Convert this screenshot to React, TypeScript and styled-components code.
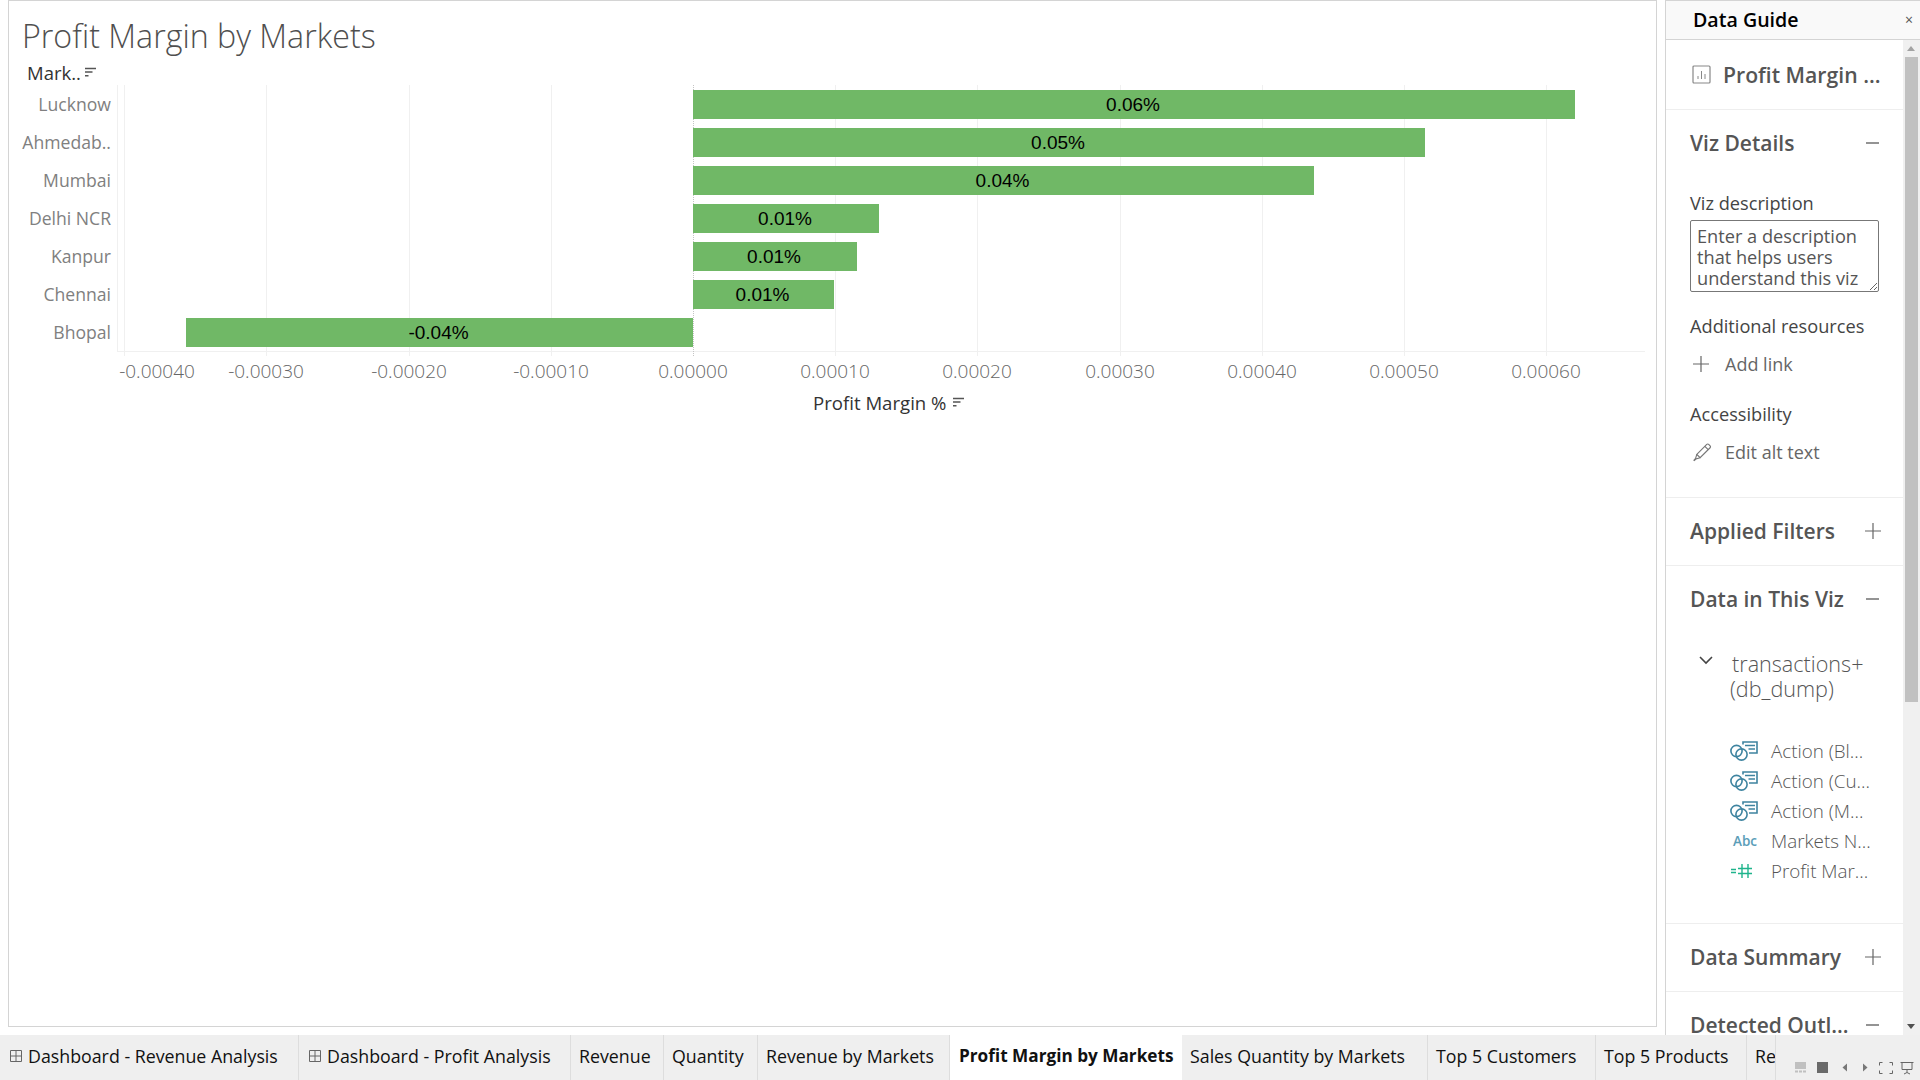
import React from "react";
import styled, { createGlobalStyle } from "styled-components";

const Global = createGlobalStyle`
  html, body { margin: 0; padding: 0; background: #fff; overflow: hidden; }
  * { box-sizing: border-box; }
  body { font-family: "Open Sans", "Liberation Sans", sans-serif; }
`;

const Page = styled.div`
  width: 1920px;
  height: 1080px;
  display: flex;
  flex-direction: column;
  overflow: hidden;
`;
const Main = styled.div`
  height: 1035px;
  display: flex;
  align-items: flex-start;
  padding-left: 8px;
`;

/* ---------- worksheet ---------- */
const Sheet = styled.section`
  width: 1649px;
  height: 1027px;
  border: 1px solid #d4d4d4;
`;
const Title = styled.h1`
  margin: 0;
  height: 60px;
  padding: 15px 0 0 13px;
  font-size: 32.2px;
  line-height: 40px;
  font-weight: 300;
  color: #4f4f4f;
  white-space: nowrap;
`;
const HeaderRow = styled.div`
  height: 24px;
  padding: 0 0 1px 18px;
  display: flex;
  align-items: center;
  gap: 4px;
  font-size: 18.5px;
  font-weight: 500;
  color: #333;
`;
const Chart = styled.div`
  display: grid;
  grid-template-columns: 108px 1528px;
`;
const RowLabels = styled.div`
  display: flex;
  flex-direction: column;
`;
const RowLabel = styled.div`
  height: 38px;
  padding-right: 6px;
  display: flex;
  align-items: center;
  justify-content: flex-end;
  font-size: 17.6px;
  color: #808080;
`;
const Plot = styled.div`
  position: relative;
  border-left: 1px solid #f0f0f0;
  border-bottom: 1px solid #f0f0f0;
  height: 267px;
`;
const GridLine = styled.div<{ $zero?: boolean }>`
  position: absolute;
  top: 0;
  bottom: -5px;
  width: 1px;
  ${(p) => (p.$zero ? "border-left: 1px dotted #c4c4c4;" : "background: #f0f0f0;")}
`;
const BarRow = styled.div`
  position: relative;
  height: 38px;
  padding: 5px 0 4px;
`;
const Bar = styled.div`
  height: 29px;
  padding-right: 2px;
  background: #70b866;
  display: flex;
  align-items: center;
  justify-content: center;
  font-family: "Liberation Sans", Arial, sans-serif;
  font-size: 19px;
  color: #000;
`;
const AxisSpacer = styled.div``;
const AxisLabels = styled.div`
  position: relative;
  height: 38px;
`;
const TickLabel = styled.span`
  position: absolute;
  top: 7px;
  transform: translateX(-50%);
  font-size: 19px;
  line-height: 24px;
  font-weight: 300;
  color: #666;
  white-space: nowrap;
`;
const AxisTitle = styled.div`
  grid-column: 1 / -1;
  height: 24px;
  padding-left: 804px;
  display: flex;
  align-items: center;
  gap: 7px;
  font-size: 18.6px;
  font-weight: 500;
  color: #333;
`;

/* ---------- data guide ---------- */
const Guide = styled.aside`
  width: 255px;
  height: 1035px;
  margin-left: 8px;
  border-left: 1px solid #d4d4d4;
  border-top: 1px solid #d4d4d4;
  display: flex;
  flex-direction: column;
`;
const GuideTop = styled.header`
  height: 39px;
  flex: none;
  background: #f9f9f9;
  border-bottom: 1px solid #d4d4d4;
  padding: 0 7px 2px 27px;
  display: flex;
  align-items: center;
  justify-content: space-between;
`;
const GuideHeading = styled.span`
  font-size: 19.6px;
  font-weight: 600;
  color: #000;
`;
const CloseGlyph = styled.span`
  font-size: 14px;
  color: #555;
`;
const GuideBody = styled.div`
  flex: 1;
  min-height: 0;
  display: flex;
`;
const GuideScroll = styled.div`
  width: 237px;
  overflow: hidden;
`;
const VizRow = styled.div`
  height: 70px;
  border-bottom: 1px solid #eee;
  padding: 0 0 0 26px;
  display: flex;
  align-items: center;
  gap: 12px;
  font-size: 21.2px;
  font-weight: 550;
  color: #555;
  white-space: nowrap;
`;
const SectionHead = styled.div`
  height: 67px;
  padding: 0 22px 1px 24px;
  display: flex;
  align-items: center;
  justify-content: space-between;
  font-size: 21px;
  font-weight: 600;
  color: #555;
  white-space: nowrap;
`;
const Section = styled.div`
  border-bottom: 1px solid #eee;
`;
const Details = styled.div`
  padding: 15px 0 6px 24px;
`;
const SubLabel = styled.div`
  height: 22px;
  line-height: 22px;
  font-size: 18.2px;
  color: #444;
  white-space: nowrap;
`;
const DescriptionBox = styled.textarea`
  display: block;
  width: 189px;
  height: 72px;
  margin: 6px 0 23px;
  padding: 5px 6px;
  border: 1px solid #777;
  border-radius: 2px;
  background: #fff;
  font-family: inherit;
  font-size: 18.2px;
  line-height: 21px;
  overflow: hidden;
  resize: both;
  outline: none;
  &::placeholder { color: #555; opacity: 1; }
`;
const ActionRow = styled.div`
  height: 38px;
  margin: 8px 0 20px;
  padding-left: 2px;
  display: flex;
  align-items: center;
  gap: 13px;
  font-size: 18px;
  color: #666;
`;
const ActionIcon = styled.span`
  width: 20px;
  flex: none;
  display: flex;
  padding-left: 1px;
`;
const SourceName = styled.div`
  padding: 0 0 0 64px;
  position: relative;
  margin-top: 18px;
  font-size: 21.6px;
  line-height: 25px;
  font-weight: 300;
  color: #555;
  text-indent: 2px;
`;
const SourceChevron = styled.span`
  position: absolute;
  left: 31px;
  top: 5px;
  line-height: 0;
`;
const FieldList = styled.div`
  padding: 35px 0 37px 64px;
`;
const FieldRow = styled.div`
  height: 30px;
  display: flex;
  align-items: center;
  gap: 13px;
  font-size: 18.8px;
  font-weight: 300;
  color: #555;
  white-space: nowrap;
`;
const FieldIcon = styled.span`
  width: 28px;
  flex: none;
  display: flex;
  justify-content: flex-start;
`;
const AbcMark = styled.span`
  padding-left: 3px;
  font-size: 13.5px;
  font-weight: 600;
  color: #5b9db8;
`;
const ScrollTrack = styled.div`
  width: 17px;
  background: #f0f0f0;
  position: relative;
  display: flex;
  flex-direction: column;
  align-items: center;
  padding-top: 17px;
`;
const ScrollThumb = styled.div`
  width: 13px;
  height: 645px;
  background: #c1c1c1;
`;
const ScrollArrow = styled.span<{ $down?: boolean }>`
  position: absolute;
  left: 4px;
  ${(p) =>
    p.$down
      ? "bottom: 6px; border-top: 5px solid #505050;"
      : "top: 6px; border-bottom: 5px solid #a3a3a3;"}
  border-left: 4px solid transparent;
  border-right: 4px solid transparent;
`;

/* ---------- tabs ---------- */
const TabBar = styled.nav`
  height: 45px;
  flex: none;
  background: #efefef;
  display: flex;
`;
const Tabs = styled.div`
  width: 1776px;
  display: flex;
  overflow: hidden;
  border-right: 1px solid #ddd;
`;
const Tab = styled.div<{ $w: number; $active?: boolean }>`
  flex: none;
  width: ${(p) => p.$w}px;
  padding: 0 0 ${(p) => (p.$active ? "5px" : "3px")} ${(p) => (p.$active ? "9px" : "8px")};
  display: flex;
  align-items: center;
  gap: 6px;
  overflow: hidden;
  white-space: nowrap;
  font-size: ${(p) => (p.$active ? "17.2px" : "17.8px")};
  color: #111;
  font-weight: ${(p) => (p.$active ? 700 : 400)};
  background: ${(p) => (p.$active ? "#fff" : "transparent")};
  border-right: 1px solid ${(p) => (p.$active ? "#fff" : "#ddd")};
`;
const GridGlyph = styled.svg`
  flex: none;
  margin-left: 2px;
`;
const Controls = styled.div`
  flex: 1;
  display: flex;
  align-items: center;
  padding: 20px 0 0 19px;
`;
const ControlSlot = styled.span<{ $w: number }>`
  flex: none;
  width: ${(p) => p.$w}px;
  display: flex;
  align-items: center;
`;
const MinusGlyph = styled.svg`
  margin-right: 2px;
`;

/* ---------- icons ---------- */
const SortIcon = () => (
  <svg width="11" height="11" viewBox="0 0 11 11" fill="none" stroke="#555" strokeWidth="1.4">
    <path d="M0 1.5h11M0 5h7.5M0 8.8h3.5" />
  </svg>
);
const BarsIcon = () => (
  <svg width="19" height="19" viewBox="0 0 19 19" fill="none">
    <rect x="1" y="1" width="17" height="17" rx="1" stroke="#888" strokeWidth="1.2" />
    <path d="M6 14v-3M9.5 14V6M13 14V9" stroke="#888" strokeWidth="1" />
  </svg>
);
const Minus = () => (
  <MinusGlyph width="13" height="14" viewBox="0 0 13 14"><path d="M0 7h13" stroke="#666" strokeWidth="1.4" /></MinusGlyph>
);
const Plus = () => (
  <svg width="16" height="16" viewBox="0 0 16 16"><path d="M0 8h16M8 0v16" stroke="#666" strokeWidth="1.2" /></svg>
);
const Pencil = () => (
  <svg width="20" height="20" viewBox="0 0 20 20" fill="none" stroke="#777" strokeWidth="1.2">
    <path d="M4 12.5 14.5 2a1.4 1.4 0 0 1 2 0l1.5 1.5a1.4 1.4 0 0 1 0 2L7.5 16z" />
    <path d="M12.5 4l3.5 3.5M4 12.5l-1.5 5 5-1.5" />
    <path d="M.8 19.2l2-2" strokeWidth="1.8" />
  </svg>
);
const Chevron = () => (
  <svg width="14" height="9" viewBox="0 0 14 9" fill="none" stroke="#444" strokeWidth="1.6"><path d="M1 1l6 6 6-6" /></svg>
);
const LinkedIcon = () => (
  <svg width="28" height="20" viewBox="0 0 28 20" fill="none" stroke="#3f84a0" strokeWidth="1.6">
    <circle cx="6.5" cy="10" r="5.6" />
    <circle cx="11.5" cy="13.5" r="5.6" />
    <path d="M13 3.5V1h14v11h-8" />
    <path d="M15 4.5h10M18.5 8h6.5" />
  </svg>
);
const MeasureIcon = () => (
  <svg width="24" height="14" viewBox="0 0 24 14" fill="none" stroke="#1fb48c" strokeWidth="1.4">
    <path d="M1 5.5h5M1 8.5h5M8 4.5h14M8 9.5h14M12 0v14M18 0v14" />
  </svg>
);
const GridMini = () => (
  <GridGlyph width="12" height="12" viewBox="0 0 12 12" fill="none" stroke="#666" strokeWidth="1">
    <path d="M.5.5h11v11H.5zM6 .5v11M.5 6h11" />
  </GridGlyph>
);
const ControlIcons = () => (
  <>
    <ControlSlot $w={22}>
      <svg width="11" height="11" viewBox="0 0 11 11"><rect width="11" height="7" fill="#c0c0c0" /><path d="M0 9.5h3M4 9.5h3M8 9.5h3" stroke="#c0c0c0" strokeWidth="2" /></svg>
    </ControlSlot>
    <ControlSlot $w={22}>
      <svg width="11" height="11" viewBox="0 0 11 11"><rect width="11" height="11" fill="#6a6a6a" /></svg>
    </ControlSlot>
    <ControlSlot $w={21}>
      <svg width="11" height="11" viewBox="0 0 11 11"><path d="M8 1.5v8L3.5 5.5z" fill="#777" /></svg>
    </ControlSlot>
    <ControlSlot $w={19}>
      <svg width="11" height="11" viewBox="0 0 11 11"><path d="M3 1.5v8l4.5-4z" fill="#777" /></svg>
    </ControlSlot>
    <ControlSlot $w={21}>
      <svg width="14" height="12" viewBox="0 0 14 12" fill="none" stroke="#666" strokeWidth="1"><path d="M.5 3.5v-3h3M10.5.5h3v3M13.5 8.5v3h-3M3.5 11.5h-3v-3" /></svg>
    </ControlSlot>
    <ControlSlot $w={14}>
      <svg width="14" height="14" viewBox="0 0 14 14" fill="none" stroke="#666" strokeWidth="1"><path d="M.5 1.5h13M2 1.5v7h10v-7M7 8.5v3M4 13l3-1.5 3 1.5" /></svg>
    </ControlSlot>
  </>
);

/* ---------- data ---------- */
const ZERO = 575;
const STEP = 142.2;
const px = (v: number) => Math.round(ZERO + (v / 0.0001) * STEP);

const rows: [string, number, string][] = [
  ["Lucknow", 0.00062, "0.06%"],
  ["Ahmedab..", 0.000515, "0.05%"],
  ["Mumbai", 0.000437, "0.04%"],
  ["Delhi NCR", 0.000131, "0.01%"],
  ["Kanpur", 0.000115, "0.01%"],
  ["Chennai", 0.0000992, "0.01%"],
  ["Bhopal", -0.0003565, "-0.04%"],
];
const ticks = [-0.0004, -0.0003, -0.0002, -0.0001, 0, 0.0001, 0.0002, 0.0003, 0.0004, 0.0005, 0.0006];

const tabs: { label: string; w: number; grid?: boolean; active?: boolean }[] = [
  { label: "Dashboard - Revenue Analysis", w: 299, grid: true },
  { label: "Dashboard - Profit Analysis", w: 272, grid: true },
  { label: "Revenue", w: 93 },
  { label: "Quantity", w: 94 },
  { label: "Revenue by Markets", w: 192 },
  { label: "Profit Margin by Markets", w: 232, active: true },
  { label: "Sales Quantity by Markets", w: 246 },
  { label: "Top 5 Customers", w: 168 },
  { label: "Top 5 Products", w: 151 },
  { label: "Re", w: 40 },
];

const fields: [React.ReactNode, string][] = [
  [<LinkedIcon />, "Action (Bl..."],
  [<LinkedIcon />, "Action (Cu..."],
  [<LinkedIcon />, "Action (M..."],
  [<AbcMark>Abc</AbcMark>, "Markets N..."],
  [<MeasureIcon />, "Profit Mar..."],
];

export default function App() {
  return (
    <Page>
      <Global />
      <Main>
        <Sheet>
          <Title>Profit Margin by Markets</Title>
          <HeaderRow>
            Mark.. <SortIcon />
          </HeaderRow>
          <Chart>
            <RowLabels>
              {rows.map(([name]) => (
                <RowLabel key={name}>{name}</RowLabel>
              ))}
            </RowLabels>
            <Plot>
              {ticks.map((t) => (
                <GridLine key={t} $zero={t === 0} style={{ left: px(t) }} />
              ))}
              {rows.map(([name, v, label]) => (
                <BarRow key={name}>
                  <Bar style={{ marginLeft: Math.min(px(v), ZERO), width: Math.abs(px(v) - ZERO) }}>{label}</Bar>
                </BarRow>
              ))}
            </Plot>
            <AxisSpacer />
            <AxisLabels>
              {ticks.map((t, i) => (
                <TickLabel key={t} style={{ left: (i === 0 ? 39 : px(t)) + 1 }}>
                  {t.toFixed(5)}
                </TickLabel>
              ))}
            </AxisLabels>
            <AxisTitle>
              Profit Margin % <SortIcon />
            </AxisTitle>
          </Chart>
        </Sheet>

        <Guide>
          <GuideTop>
            <GuideHeading>Data Guide</GuideHeading>
            <CloseGlyph>×</CloseGlyph>
          </GuideTop>
          <GuideBody>
            <GuideScroll>
              <VizRow>
                <BarsIcon />
                Profit Margin ...
              </VizRow>
              <Section>
                <SectionHead>
                  Viz Details <Minus />
                </SectionHead>
                <Details>
                  <SubLabel>Viz description</SubLabel>
                  <DescriptionBox placeholder="Enter a description that helps users understand this viz" />
                  <SubLabel>Additional resources</SubLabel>
                  <ActionRow>
                    <ActionIcon>
                      <Plus />
                    </ActionIcon>
                    Add link
                  </ActionRow>
                  <SubLabel>Accessibility</SubLabel>
                  <ActionRow>
                    <ActionIcon>
                      <Pencil />
                    </ActionIcon>
                    Edit alt text
                  </ActionRow>
                </Details>
              </Section>
              <Section>
                <SectionHead>
                  Applied Filters <Plus />
                </SectionHead>
              </Section>
              <Section>
                <SectionHead>
                  Data in This Viz <Minus />
                </SectionHead>
                <SourceName>
                  <SourceChevron>
                    <Chevron />
                  </SourceChevron>
                  transactions+ (db_dump)
                </SourceName>
                <FieldList>
                  {fields.map(([icon, text], i) => (
                    <FieldRow key={i}>
                      <FieldIcon>{icon}</FieldIcon>
                      {text}
                    </FieldRow>
                  ))}
                </FieldList>
              </Section>
              <Section>
                <SectionHead>
                  Data Summary <Plus />
                </SectionHead>
              </Section>
              <SectionHead>
                Detected Outl... <Minus />
              </SectionHead>
            </GuideScroll>
            <ScrollTrack>
              <ScrollArrow />
              <ScrollThumb />
              <ScrollArrow $down />
            </ScrollTrack>
          </GuideBody>
        </Guide>
      </Main>
      <TabBar>
        <Tabs>
          {tabs.map((t) => (
            <Tab key={t.label} $w={t.w} $active={t.active}>
              {t.grid && <GridMini />}
              {t.label}
            </Tab>
          ))}
        </Tabs>
        <Controls>
          <ControlIcons />
        </Controls>
      </TabBar>
    </Page>
  );
}
